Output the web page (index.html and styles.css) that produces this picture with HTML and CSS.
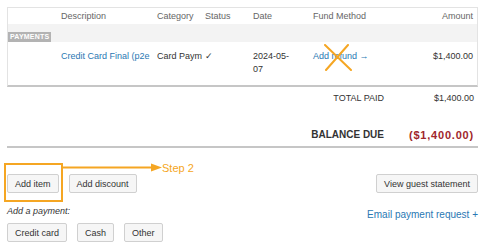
FILE: index.html
```html
<!DOCTYPE html>
<html lang="en">

<head>
    <meta charset="UTF-8">
    <meta name="viewport" content="width=device-width, initial-scale=1.0">
    <title>Folio</title>
    <link rel="stylesheet" href="styles.css">
</head>

<body>
    <div class="page">

        <table class="items">
            <colgroup>
                <col class="c-select">
                <col class="c-desc">
                <col class="c-cat">
                <col class="c-status">
                <col class="c-date">
                <col class="c-fund">
                <col>
            </colgroup>
            <thead>
                <tr>
                    <th></th>
                    <th>Description</th>
                    <th>Category</th>
                    <th>Status</th>
                    <th>Date</th>
                    <th>Fund Method</th>
                    <th class="num">Amount</th>
                </tr>
            </thead>
            <tbody>
                <tr class="group">
                    <td colspan="7"><span class="badge">Payments</span></td>
                </tr>
                <tr class="line">
                    <td></td>
                    <td><div class="clip"><a class="link" href="#">Credit Card Final (p2e</a></div></td>
                    <td><div class="clip">Card Paym</div></td>
                    <td class="check">&#10003;</td>
                    <td class="date">2024-05-07</td>
                    <td>
                        <span class="refund">
                            <a class="link" href="#">Add refund &rarr;</a>
                            <svg class="cross" width="28" height="27" viewBox="0 0 28 27">
                                <path d="M1 1 L27 26 M24 1 L2 26" stroke="#f5a623" stroke-width="2" fill="none" stroke-linecap="round" />
                            </svg>
                        </span>
                    </td>
                    <td class="num">$1,400.00</td>
                </tr>
            </tbody>
        </table>

        <div class="totals">
            <div class="totals-row">
                <span class="totals-label">TOTAL PAID</span>
                <span class="totals-value">$1,400.00</span>
            </div>
            <div class="totals-row balance">
                <span class="totals-label">BALANCE DUE</span>
                <span class="totals-value">($1,400.00)</span>
            </div>
        </div>

        <div class="actions">
            <div class="btn-group">
                <button class="btn">Add item</button>
                <button class="btn">Add discount</button>
            </div>
            <button class="btn">View guest statement</button>

            <!-- annotation -->
            <div class="callout-box"></div>
            <svg class="callout-arrow" width="100" height="9" viewBox="0 0 100 9">
                <line x1="0" y1="4.5" x2="92" y2="4.5" stroke="#f5a623" stroke-width="2" />
                <path d="M88 0.5 L99 4.5 L88 8.5 Z" fill="#f5a623" />
            </svg>
            <span class="callout-text">Step 2</span>
        </div>

        <div class="payments">
            <div>
                <div class="payments-label">Add a payment:</div>
                <div class="btn-group">
                    <button class="btn">Credit card</button>
                    <button class="btn">Cash</button>
                    <button class="btn">Other</button>
                </div>
            </div>
            <a class="link email" href="#">Email payment request +</a>
        </div>

    </div>
</body>

</html>
```

FILE: styles.css
```css
body {
    margin: 0;
    font-family: "Liberation Sans", Arial, sans-serif;
    color: #333;
    background-color: white;
}

.page {
    padding: 7px 7px 0 7px;
}

.link {
    color: #2a78b3;
    text-decoration: none;
}

/* Tabla de items */
.items {
    width: 100%;
    table-layout: fixed;
    border-collapse: separate;
    border-spacing: 0;
    border: 1px solid #e3e3e3;
    border-bottom: 2px solid #c6c6c6;
    font-size: 9px;
}

.c-select { width: 53px; }
.c-desc { width: 96px; }
.c-cat { width: 48px; }
.c-status { width: 48px; }
.c-date { width: 60px; }
.c-fund { width: 90px; }

.items th {
    height: 16px;
    padding: 0;
    font-weight: normal;
    color: #666;
    text-align: left;
    line-height: 16px;
}

.items td {
    padding: 0;
    vertical-align: top;
}

.items .num {
    text-align: right;
    padding-right: 4px;
}

.group td {
    height: 18px;
    padding-top: 7px;
    box-sizing: border-box;
    background-color: #f3f3f3;
}

.badge {
    display: inline-block;
    background-color: #b3b3b3;
    color: white;
    font-size: 7px;
    font-weight: bold;
    line-height: 10px;
    padding: 0 2px;
    text-transform: uppercase;
    letter-spacing: 0.2px;
}

.line td {
    height: 43px;
    box-sizing: border-box;
    padding-top: 8px;
    line-height: 13px;
}

.clip {
    white-space: nowrap;
    overflow: hidden;
    margin-right: 3px;
}

.date {
    padding-right: 16px !important;
}

.refund {
    position: relative;
    display: inline-block;
}

.cross {
    position: absolute;
    left: 11px;
    top: -6px;
}

/* Totales */
.totals {
    border-bottom: 2px solid #c6c6c6;
    padding-right: 4px;
}

.totals-row {
    display: grid;
    grid-template-columns: 1fr 90px;
    font-size: 9px;
    line-height: 11px;
    padding: 6px 0;
}

.totals-label,
.totals-value {
    text-align: right;
}

.balance {
    margin-top: 18px;
    padding: 0 0 4px 0;
    line-height: 14px;
    font-weight: bold;
    font-size: 10px;
}

.balance .totals-value {
    color: #a0262b;
    font-size: 11px;
    letter-spacing: 0.8px;
}

/* Botones */
.actions {
    position: relative;
    display: flex;
    justify-content: space-between;
    align-items: center;
    margin-top: 26px;
}

.btn-group {
    display: flex;
    gap: 10px;
}

.btn {
    height: 19px;
    padding: 0 7px;
    font-family: inherit;
    font-size: 9px;
    color: #333;
    background-color: #f6f6f6;
    border: 1px solid #d0d0d0;
    border-radius: 2px;
}

.callout-box {
    position: absolute;
    left: -3px;
    top: -11px;
    width: 59px;
    height: 39px;
    box-sizing: border-box;
    border: 2px solid #f5a623;
}

.callout-arrow {
    position: absolute;
    left: 56px;
    top: -11px;
}

.callout-text {
    position: absolute;
    left: 155px;
    top: -13px;
    font-size: 11px;
    line-height: 14px;
    color: #f5a623;
}

/* Pagos */
.payments {
    display: flex;
    justify-content: space-between;
    align-items: flex-start;
    margin-top: 12px;
}

.payments-label {
    font-size: 9px;
    font-style: italic;
    line-height: 12px;
    margin-bottom: 6px;
}

.email {
    font-size: 10px;
    line-height: 12px;
    padding-top: 4px;
}
```
